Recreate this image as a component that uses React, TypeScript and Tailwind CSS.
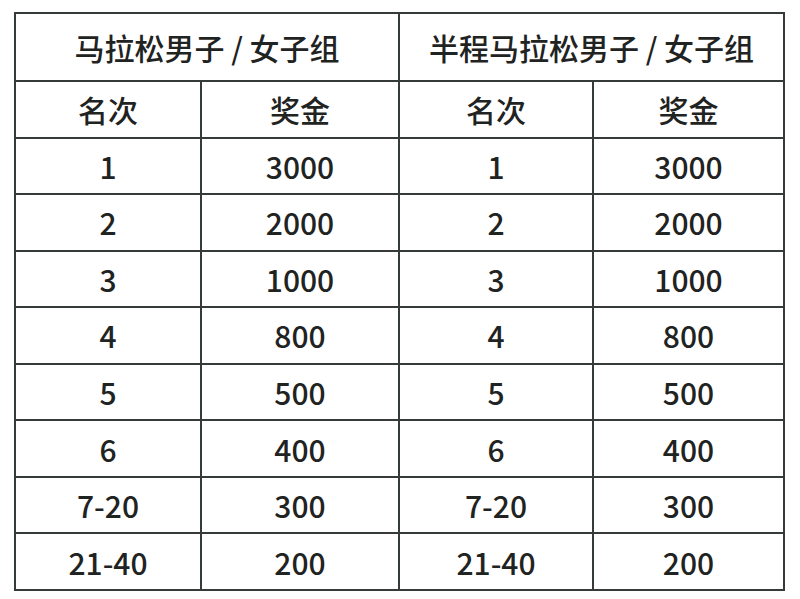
import React from "react";

const rows: [string, string][] = [
  ["1", "3000"],
  ["2", "2000"],
  ["3", "1000"],
  ["4", "800"],
  ["5", "500"],
  ["6", "400"],
  ["7-20", "300"],
  ["21-40", "200"],
];

const groups = ["马拉松男子 / 女子组", "半程马拉松男子 / 女子组"];

function Cell({ children, span }: { children: React.ReactNode; span?: boolean }) {
  return (
    <div className={`bg-white flex items-center justify-center ${span ? "col-span-2" : ""}`}>
      {children}
    </div>
  );
}

export default function App() {
  return (
    <div
      className="w-[800px] h-[599px] bg-white pt-[12px] pl-[14px] text-[#1f2322] text-[30px] font-medium leading-none"
      style={{ fontFamily: '"Noto Sans CJK SC", "Noto Sans", sans-serif' }}
    >
      <div className="grid w-[771px] h-[579px] bg-[#353a3a] p-[2px] gap-[2px] grid-cols-[184px_196px_192px_189px] grid-rows-[66px_repeat(9,1fr)]">
        {groups.map((g) => (
          <Cell key={g} span>
            {g}
          </Cell>
        ))}
        <Cell>名次</Cell>
        <Cell>奖金</Cell>
        <Cell>名次</Cell>
        <Cell>奖金</Cell>
        {rows.map(([rank, prize]) => (
          <React.Fragment key={rank}>
            <Cell>{rank}</Cell>
            <Cell>{prize}</Cell>
            <Cell>{rank}</Cell>
            <Cell>{prize}</Cell>
          </React.Fragment>
        ))}
      </div>
    </div>
  );
}
